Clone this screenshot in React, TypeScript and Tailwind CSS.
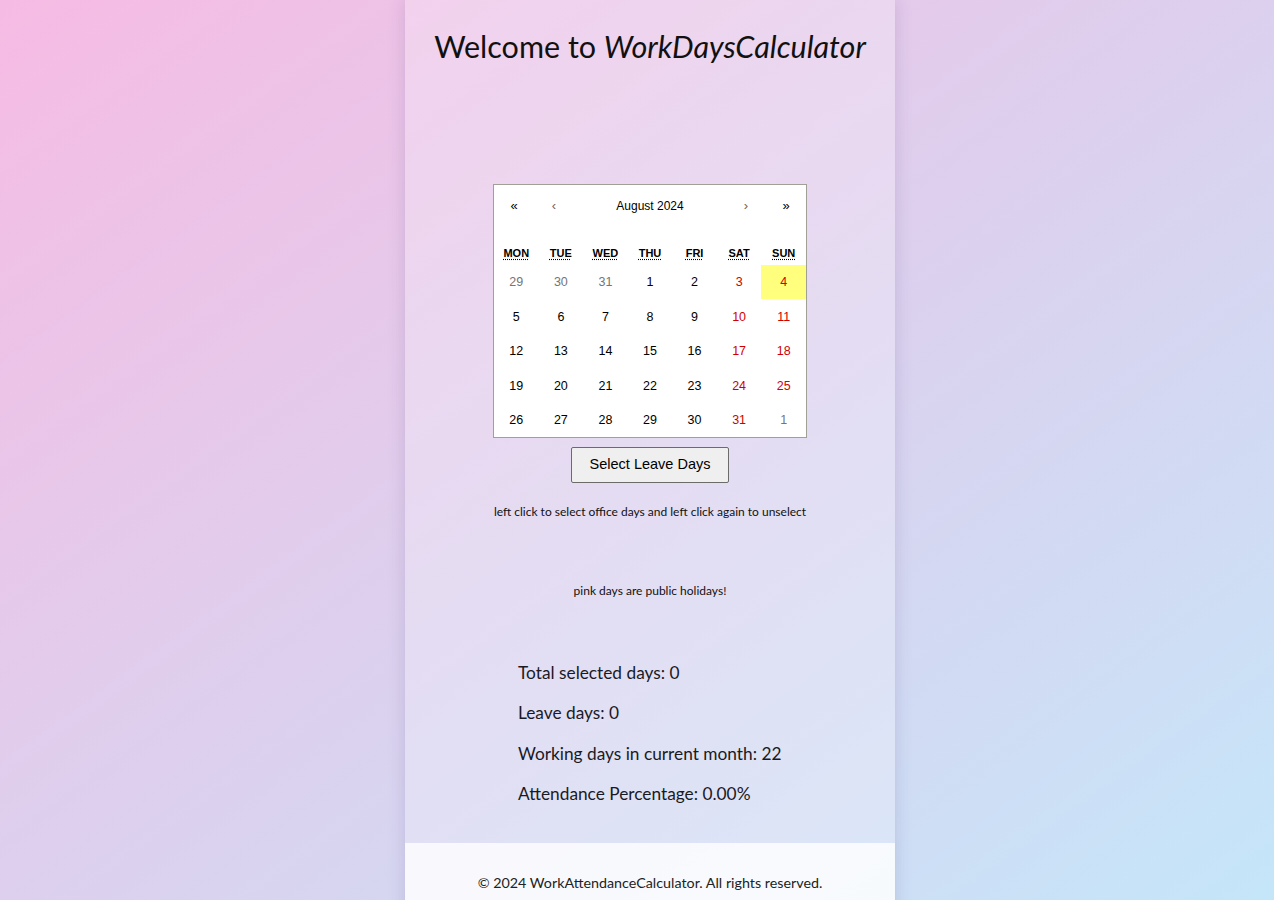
import React from "react";

type Tile = { d: number; kind: "prev" | "cur" | "next"; weekend: boolean; now?: boolean };

const rows: Tile[][] = [];
(() => {
  const all: Tile[] = [];
  [29, 30, 31].forEach((d) => all.push({ d, kind: "prev", weekend: false }));
  for (let d = 1; d <= 31; d++) {
    const idx = all.length % 7;
    all.push({ d, kind: "cur", weekend: idx >= 5, now: d === 4 });
  }
  all.push({ d: 1, kind: "next", weekend: true });
  for (let i = 0; i < all.length; i += 7) rows.push(all.slice(i, i + 7));
})();

const days = ["Mon", "Tue", "Wed", "Thu", "Fri", "Sat", "Sun"];

function Calendar() {
  return (
    <div className="w-[314px] border border-[#a0a096] bg-white font-['Liberation_Sans',Arial,sans-serif] text-black">
      <div className="flex h-[42px] mb-[14px] items-center text-[12px]">
        <button className="w-[40px] h-full text-[13px]">«</button>
        <button className="w-[40px] h-full text-[13px] text-[#666]">‹</button>
        <span className="flex-1 text-center">August 2024</span>
        <button className="w-[40px] h-full text-[13px] text-[#666]">›</button>
        <button className="w-[40px] h-full text-[13px]">»</button>
      </div>
      <div className="grid grid-cols-7 h-[24px] items-center text-center text-[11px] font-bold uppercase">
        {days.map((d) => (
          <div key={d}>
            <abbr className="underline decoration-dotted underline-offset-[2px]" title={d}>
              {d}
            </abbr>
          </div>
        ))}
      </div>
      <div className="grid grid-cols-7 grid-rows-5 h-[172px] text-[12.5px] text-center">
        {rows.flat().map((t, i) => (
          <div
            key={i}
            className={`flex items-center justify-center pt-[1px] ${t.now ? "bg-[#ffff7d]" : ""} ${
              t.kind !== "cur" ? "text-[#757575]" : t.weekend ? "text-[#d10000]" : "text-black"
            }`}
          >
            {t.d}
          </div>
        ))}
      </div>
    </div>
  );
}

export default function App() {
  return (
    <div className="min-h-screen w-full flex justify-center pl-[26px] bg-gradient-to-br from-[#f6bbe4] via-[#dcd0ee] to-[#c4e6f9] font-['Lato','Noto_Sans',sans-serif]">
      <div className="w-[490px] min-h-screen flex flex-col bg-white/25 shadow-[0_0_16px_rgba(80,60,120,0.18)]">
        <h1 className="pt-[26px] text-center text-[30.5px] leading-[40px] text-[#111]">
          Welcome to <i>WorkDaysCalculator</i>
        </h1>
        <div className="mt-[118px] flex flex-col items-center">
          <Calendar />
          <button className="mt-[9px] w-[158px] h-[36px] bg-[#efefef] border border-[#6b6b6b] rounded-[2px] text-[14.5px] text-black font-['Liberation_Sans',Arial,sans-serif]">
            Select Leave Days
          </button>
          <p className="mt-[21px] text-[12px] leading-[16px] text-[#111]">
            left click to select office days and left click again to unselect
          </p>
          <p className="mt-[63px] text-[12px] leading-[16px] text-[#111]">pink days are public holidays!</p>
        </div>
        <div className="mt-[62px] pl-[113px] flex flex-col gap-[16.3px] text-[17.3px] leading-[24px] text-[#1a1a24]">
          <p>Total selected days: 0</p>
          <p>Leave days: 0</p>
          <p>Working days in current month: 22</p>
          <p>Attendance Percentage: 0.00%</p>
        </div>
        <footer className="mt-[37px] bg-white/80 pt-[30px] pb-[30px] text-center text-[14.3px] leading-[20px] text-[#222]">
          © 2024 WorkAttendanceCalculator. All rights reserved.
        </footer>
      </div>
    </div>
  );
}
